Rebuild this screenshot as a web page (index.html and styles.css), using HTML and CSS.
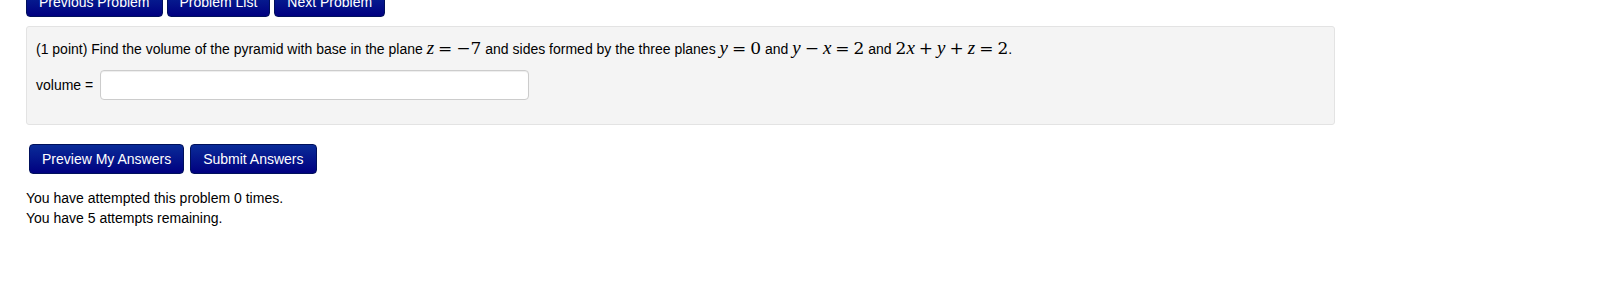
FILE: index.html
```html
<!DOCTYPE html>
<html lang="en">
<head>
    <meta charset="UTF-8">
    <title>Problem</title>
    <link rel="stylesheet" href="styles.css">
</head>
<body>
    <div class="page">
        <div class="nav-row">
            <button class="btn">Previous Problem</button>
            <button class="btn">Problem List</button>
            <button class="btn">Next Problem</button>
        </div>

        <div class="problem-box">
            <p class="problem-text">
                (1 point) Find the volume of the pyramid with base in the plane
                <span class="math"><i>z</i><span class="op">=</span>&minus;7</span>
                and sides formed by the three planes
                <span class="math"><i>y</i><span class="op">=</span>0</span>
                and
                <span class="math"><i>y</i><span class="op">&minus;</span><i>x</i><span class="op">=</span>2</span>
                and
                <span class="math">2<i>x</i><span class="op">+</span><i>y</i><span class="op">+</span><i>z</i><span class="op">=</span>2</span>.
            </p>
            <div class="answer-row">
                <label for="answer">volume =</label>
                <input id="answer" class="answer-input" type="text">
            </div>
        </div>

        <div class="submit-row">
            <button class="btn">Preview My Answers</button>
            <button class="btn">Submit Answers</button>
        </div>

        <div class="attempts">
            <div>You have attempted this problem 0 times.</div>
            <div>You have 5 attempts remaining.</div>
        </div>
    </div>
</body>
</html>
```

FILE: styles.css
```css
body {
    margin: 0;
    background: #fff;
    font-family: 'Liberation Sans', Arial, sans-serif;
    font-size: 14px;
    color: #000;
}
.page {
    padding: 0 26px;
    width: 1309px;
}
.btn {
    font-family: 'Liberation Sans', Arial, sans-serif;
    font-size: 14px;
    color: #fff;
    background: linear-gradient(to bottom, #0a2c98, #000080);
    border: 1px solid #00105c;
    border-radius: 4px;
    padding: 0 12px;
    height: 30px;
    cursor: pointer;
}
.nav-row {
    display: flex;
    gap: 4px;
    margin-top: -13px;
}
.problem-box {
    margin-top: 9px;
    background: #f4f4f4;
    border: 1px solid #e3e3e3;
    border-radius: 3px;
    padding: 11px 9px 24px;
}
.problem-text {
    margin: 0;
    line-height: 20px;
}
.math {
    font-family: 'DejaVu Serif', 'Liberation Serif', serif;
    font-size: 17px;
    white-space: nowrap;
}
.math i {
    font-family: 'Liberation Serif', serif;
    font-size: 19px;
}
.op {
    padding: 0 4px;
}
.answer-row {
    display: flex;
    align-items: center;
    gap: 7px;
    margin-top: 11px;
}
.answer-input {
    width: 429px;
    height: 30px;
    box-sizing: border-box;
    padding: 0 6px;
    border: 1px solid #ccc;
    border-radius: 4px;
    background: #fff;
    box-shadow: inset 0 1px 1px rgba(0, 0, 0, 0.075);
}
.submit-row {
    display: flex;
    gap: 6px;
    margin: 19px 0 0 3px;
}
.attempts {
    margin-top: 14px;
    line-height: 20px;
}
```
